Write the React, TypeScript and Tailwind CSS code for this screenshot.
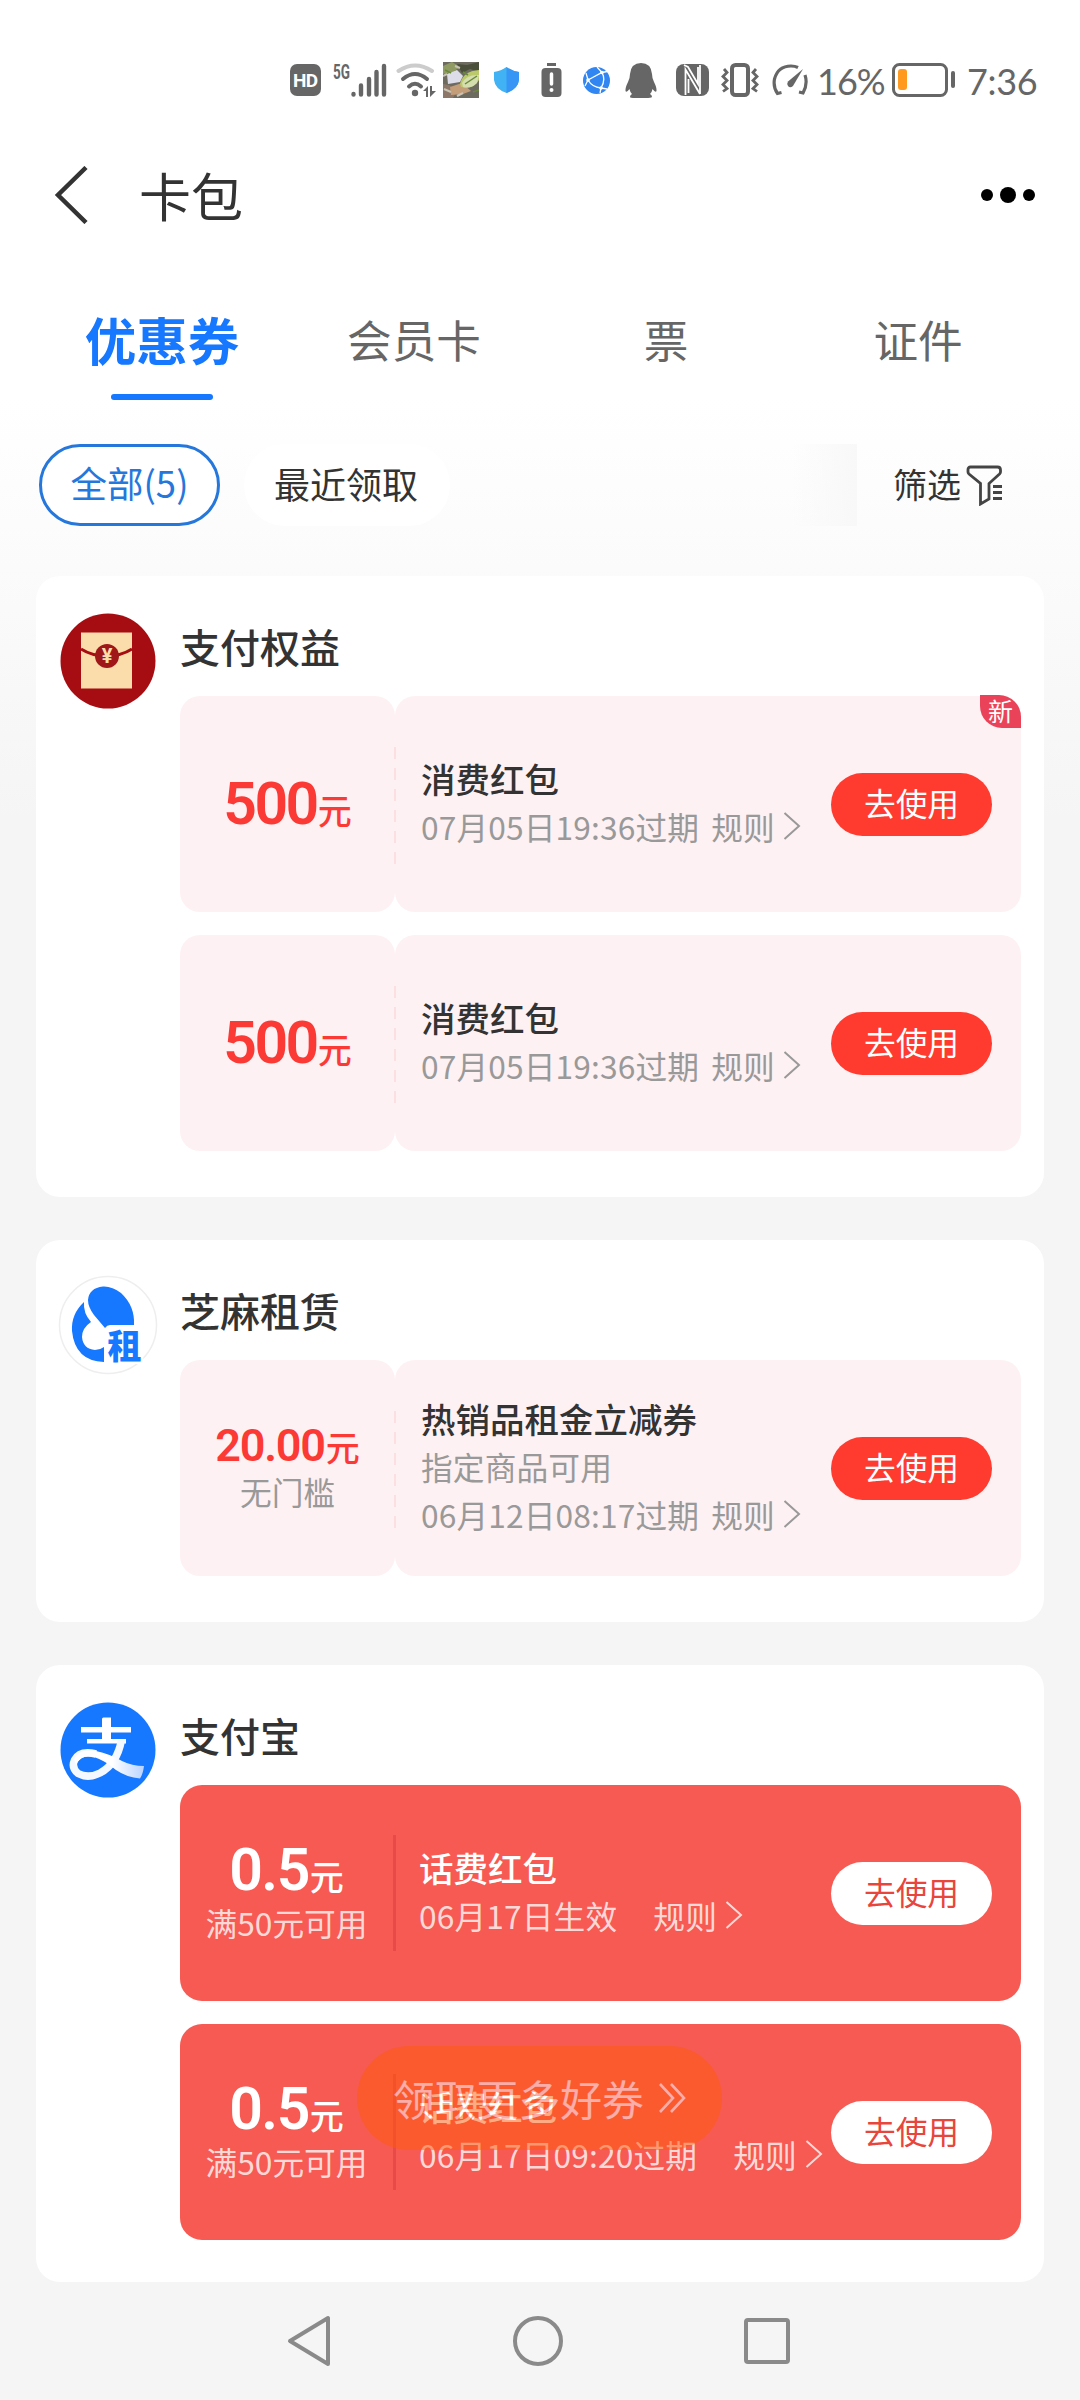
import type { ReactNode } from 'react'

type Coupon = {
    amount: string
    small?: boolean
    limit?: string
    name: string
    desc?: string
    date: string
    isNew?: boolean
}

const payCoupons: Coupon[] = [
    { amount: '500', name: '消费红包', date: '07月05日19:36过期', isNew: true },
    { amount: '500', name: '消费红包', date: '07月05日19:36过期' },
]

const rentCoupons: Coupon[] = [
    {
        amount: '20.00',
        small: true,
        limit: '无门槛',
        name: '热销品租金立减券',
        desc: '指定商品可用',
        date: '06月12日08:17过期',
    },
]

const alipayCoupons: Coupon[] = [
    { amount: '0.5', limit: '满50元可用', name: '话费红包', date: '06月17日生效' },
    { amount: '0.5', limit: '满50元可用', name: '话费红包', date: '06月17日09:20过期' },
]

const StatusBar = () => {
    return (
        <div className="flex h-[112px] items-center pt-12 pl-[290px] text-[#666]">
            <svg width="31" height="32" viewBox="0 0 31 32">
                <rect width="31" height="32" rx="7" fill="#666" />
                <text x="15.5" y="23" fontSize="19" fontWeight="700" fill="#fff" textAnchor="middle" textLength="25" fontFamily="Roboto, sans-serif">HD</text>
            </svg>
            <svg className="ml-3 overflow-visible" width="54" height="36" viewBox="0 0 54 36">
                <text x="0" y="17" fontSize="20" fontWeight="700" fill="#666" textLength="17" lengthAdjust="spacingAndGlyphs" fontFamily="Roboto, sans-serif">5G</text>
                <path d="M20.500 32.500v-.5M28 32.500v-9M36 32.500V17M43.500 32.500V10M51 32.500V4" stroke="#666" strokeWidth="4.400" strokeLinecap="round" />
            </svg>
            <svg className="ml-[9px]" width="41" height="36" viewBox="0 0 41 36">
                <path d="M2.500 9Q19 -2 36 9" stroke="#ccc" strokeWidth="4" fill="none" strokeLinecap="round" />
                <path d="M7 17Q19 7 31 17M13 24.500Q19 19 25 24.500" stroke="#666" strokeWidth="4" fill="none" strokeLinecap="round" />
                <circle cx="19" cy="31" r="3.200" fill="#666" />
                <path d="M27 29l5-5v11h-2v-6zM34 24v11l6-6h-4v-5z" fill="#666" />
            </svg>
            <svg className="ml-[6px]" width="36" height="36" viewBox="0 0 36 36">
                <rect width="36" height="36" fill="#6d6b60" />
                <path d="M0 4l9-4 8 5-7 5-10 2z" fill="#8f9b62" />
                <path d="M14 2l10 1 12-3v10l-9-3-8 4z" fill="#4a4f3a" />
                <path d="M4 12l10-4 6 6-3 6-12 2z" fill="#dcdde8" />
                <path d="M0 22l6 1 8 6-4 7H0z" fill="#8d7768" />
                <path d="M7 25l12-4 9 8-8 3-12 1z" fill="#c39c78" />
                <path d="M17 22q3-13 19-14v10q-6 10-18 7z" fill="#bcc96a" />
                <path d="M19 21q5-9 17-8l-2 8q-6 6-14 4z" fill="#d4deae" />
                <path d="M22 22l12-8M20 10l5 3M2 8l6 3M30 30l6-2" stroke="#6a8a3a" strokeWidth="1.500" />
                <path d="M0 14l4-2M12 4l5 2M1 27l7 3M14 34l6-3" stroke="#c9c4b4" strokeWidth="2" />
            </svg>
            <svg className="ml-[14px]" width="27" height="26" viewBox="0 0 27 26">
                <path d="M13.500 0Q19 4 26 5v8q-1 9-12.500 13Q2 22 1 13V5Q8 4 13.500 0z" fill="#41b2f4" />
                <path d="M13.500 0Q19 4 26 5v8q-1 9-12.500 13z" fill="#3795f5" />
            </svg>
            <svg className="ml-[21px]" width="21" height="35" viewBox="0 0 21 35">
                <path d="M6 0h9v3H6z" fill="#666" />
                <rect x="0.500" y="5" width="20" height="29" rx="4" fill="#666" />
                <path d="M10.500 11v10" stroke="#fff" strokeWidth="3.500" strokeLinecap="round" />
                <circle cx="10.500" cy="27" r="2" fill="#fff" />
            </svg>
            <svg className="ml-[21px]" width="27" height="27" viewBox="0 0 27 27">
                <circle cx="13.500" cy="13.500" r="13.500" fill="#3186f2" />
                <path d="M5 13L19 5.500Q23 13 18 21Q9 20 5 13L3 6M19 5.500L14 0M19 5.500l5-1M5 13l-3 6M18 21l6 1M18 21l-1 5" stroke="#fff" strokeWidth="1.300" fill="none" />
                <circle cx="5" cy="13" r="1.800" fill="#fff" />
                <circle cx="19" cy="5.500" r="1.800" fill="#fff" />
                <circle cx="18" cy="21" r="1.800" fill="#fff" />
            </svg>
            <svg className="ml-[15px]" width="32" height="35" viewBox="0 0 32 35">
                <path d="M16 0Q26 0 27 11q0 4 2 8 3 6 2.500 9-1 2-4-2-.5 3-2.500 5 2 1 2 3-1 1-6 1H10q-5 0-5-1 0-2 2-3-2-2-2.500-5-3 4-4 2Q0 25 3 19q2-4 2-8Q6 0 16 0z" fill="#666" />
            </svg>
            <svg className="ml-[19px]" width="33" height="32" viewBox="0 0 33 32">
                <rect width="33" height="32" rx="8" fill="#666" />
                <path d="M9.500 31V5.500L24 30M8 1l4 2 10 17V3M24 1v29M12.500 29V15" stroke="#fff" strokeWidth="1.800" fill="none" />
            </svg>
            <svg className="ml-[11px]" width="40" height="34" viewBox="0 0 40 34">
                <rect x="12" y="2" width="16" height="30" rx="3.500" stroke="#666" strokeWidth="4" fill="none" />
                <path d="M4 6l3 3.500-4 4 4 4-4 4 4 4-4 3M36 6l-3 3.500 4 4-4 4 4 4-4 4 4 3" stroke="#666" strokeWidth="2.800" fill="none" />
            </svg>
            <svg className="ml-[12px]" width="37" height="32" viewBox="0 0 37 32">
                <path d="M9.500 28.500l-4 1Q1 23 2.500 15 6 2 19 2q4 0 7 1.500M33 11q3 9-2 18l-4-1" stroke="#666" strokeWidth="3.200" fill="none" />
                <path d="M31 5L21 22q-3 2.500-5 0-1.500-2 0-4.500z" fill="#666" />
            </svg>
            <span className="ml-[8px] w-[66px] pt-0.5 font-[Lato] text-[36px] tracking-[-1px] whitespace-nowrap">16%</span>
            <svg className="ml-[9px]" width="64" height="34" viewBox="0 0 64 34">
                <rect x="1.500" y="1.500" width="53" height="31" rx="6" stroke="#666" strokeWidth="3" fill="none" />
                <rect x="6" y="6" width="9" height="21" rx="3" fill="#ff9a1e" />
                <rect x="59" y="8" width="4" height="17" rx="2" fill="#666" />
            </svg>
            <span className="ml-[11px] pt-0.5 font-[Lato] text-[36px] tracking-[-0.300px] whitespace-nowrap">7:36</span>
        </div>
    )
}

const Header = () => {
    return (
        <div className="flex h-[166px] items-center pr-[45px] pl-[54px]">
            <svg width="35" height="58" viewBox="0 0 35 58">
                <path d="M32 1.500L4 29l28 27.500" stroke="#333" strokeWidth="4.500" fill="none" />
            </svg>
            <h1 className="ml-[50px] text-[52px] leading-none text-[#333]">卡包</h1>
            <div className="ml-auto flex items-center gap-[7px]">
                <span className="h-3 w-3 rounded-full bg-black" />
                <span className="h-4 w-4 rounded-full bg-black" />
                <span className="h-3 w-3 rounded-full bg-black" />
            </div>
        </div>
    )
}

const Tabs = () => {
    return (
        <div className="grid h-[126px] grid-cols-4 px-9 text-center text-[44.600px] leading-[122px] text-[#666]">
            <div className="relative text-[51.500px] font-bold text-[#1677ff]">
                优惠券
                <span className="absolute bottom-1 left-[75px] h-[6px] w-[102px] rounded-full bg-[#1677ff]" />
            </div>
            <div>会员卡</div>
            <div>票</div>
            <div>证件</div>
        </div>
    )
}

const Filters = () => {
    return (
        <div className="mt-10 flex h-[82px] items-center pl-[39px] text-[36px] text-[#333]">
            <div className="flex h-[82px] w-[181px] items-center justify-center rounded-full border-[3px] border-[#2577dc] bg-white pb-1 text-[36.500px] text-[#2577dc]">
                全部(5)
            </div>
            <div className="ml-6 flex h-[82px] w-[206px] items-center justify-center rounded-full bg-white pr-0.5 pb-1">最近领取</div>
            <div className="ml-[342px] h-[82px] w-[65px] bg-linear-to-r from-transparent to-[#f8f8f8]" />
            <div className="ml-[36px] pb-1 text-[34px]">筛选</div>
            <svg className="ml-[5px]" width="37" height="41" viewBox="0 0 37 41">
                <path d="M4.500 2h27q3 0 3 3v2q0 1-1 2L23 18.500V34l-8.500 5V18.500L3 9Q2 8 2 7V4.500Q2 2 4.500 2z" stroke="#444" strokeWidth="2.800" fill="none" />
                <path d="M27 21.500h9M27 27.500h9M27 33.500h9" stroke="#444" strokeWidth="2.800" />
            </svg>
        </div>
    )
}

const EnvelopeLogo = () => (
    <svg width="96" height="96" viewBox="0 0 96 96">
        <circle cx="48" cy="48" r="47.500" fill="#a50d12" />
        <rect x="21" y="19.500" width="51" height="56" fill="#fbdcab" />
        <path d="M21 36q11 7 25.500 7T72 36" stroke="#a50d12" strokeWidth="3" fill="none" />
        <circle cx="47" cy="43" r="12" fill="#a0171a" />
        <text x="47" y="50" fontSize="20" fontWeight="700" fill="#fbdcab" textAnchor="middle" fontFamily="Roboto, sans-serif">¥</text>
    </svg>
)

const RentLogo = () => (
    <svg width="100" height="100" viewBox="0 0 100 100">
        <circle cx="50" cy="50" r="48.500" fill="#fff" stroke="#eee" strokeWidth="1.500" />
        <path d="M26 27Q13 39 14 56q3 30 32 31V72q-4 3-9 3-12-1-13-13 0-9 9-15-8-9-7-20z" fill="#1677ff" />
        <path d="M45 11.500Q31 13 30 25q0 7 6 15l11 13q2-3 5-3h24q1-19-13-32-9-7-18-6.500z" fill="#1677ff" />
        <text x="66.500" y="84" fontSize="34" fontWeight="900" fill="#1677ff" stroke="#fff" strokeWidth="5" paintOrder="stroke" textAnchor="middle" fontFamily="Noto Sans CJK SC, sans-serif">租</text>
    </svg>
)

const AlipayLogo = () => (
    <svg width="96" height="96" viewBox="0 0 96 96">
        <defs>
            <linearGradient id="tail" x1="0" x2="1">
                <stop offset="0.550" stopColor="#fff" />
                <stop offset="1" stopColor="#b9d3ff" />
            </linearGradient>
        </defs>
        <circle cx="48" cy="48" r="47.500" fill="#1677ff" />
        <path d="M42 17q0-1.500 1.500-1.500H51V38h-9z" fill="#fff" />
        <path d="M21 25h50v5.500H21zM27 37h39v4.500H27z" fill="#fff" />
        <path d="M61.500 38Q57 62 40 71 28 77 18 71.500q-7-6-3.500-13.500Q20 48 36 52" stroke="#f4f8ff" strokeWidth="7.500" fill="none" />
        <path d="M14 57Q20 46 36 49q14 3 26 10 10 5 22 5-1 8-4 12.500-13-1-24-8.500Q44 58 34 55q-13-3-18 8z" fill="url(#tail)" />
    </svg>
)

const Arrow = ({ color }: { color: string }) => (
    <svg width="18" height="28" viewBox="0 0 18 28">
        <path d="M1.500 1L16 14 1.500 27" stroke={color} strokeWidth="2" fill="none" />
    </svg>
)

const PinkCoupon = ({ item }: { item: Coupon }) => {
    return (
        <div className="relative flex h-[216px]">
            <div className="flex w-[215px] flex-col items-center justify-center rounded-[20px] bg-[#fef1f3]">
                <div className={`flex items-baseline text-[#fb3a35] ${item.small ? 'leading-[44px]' : 'pt-1.5 leading-[48px]'}`}>
                    <span className={item.small ? 'font-[Roboto] text-[45px] font-semibold tracking-[-1.200px]' : 'font-[Roboto] text-[59px] font-semibold tracking-[-2.500px]'}>
                        {item.amount}
                    </span>
                    <span className="ml-px text-[34px] font-medium">元</span>
                </div>
                {item.limit && <div className="text-[31.700px] leading-[44px] text-[#999]">{item.limit}</div>}
            </div>
            <div className="flex flex-1 items-center rounded-[20px] bg-[#fef1f3] pr-[29px] pl-[26px]">
                <div className="flex-1 pb-1 text-[31.700px] leading-[48px] tracking-[0.150px] whitespace-nowrap text-[#999]">
                    <div className="text-[34.500px] font-medium tracking-normal text-[#333]">{item.name}</div>
                    {item.desc && <div>{item.desc}</div>}
                    <div className="flex items-center">
                        <span>{item.date}</span>
                        <span className="mr-[8px] ml-3">规则</span>
                        <Arrow color="#999" />
                    </div>
                </div>
                <button className="h-[63px] w-[161px] rounded-full bg-[#ff3b30] pb-[3px] text-[31.700px] leading-none text-white">去使用</button>
            </div>
            {/* perforation between the two halves */}
            <svg className="absolute top-[51px] left-[213px]" width="4" height="118" viewBox="0 0 4 118">
                <path d="M2 0v118" stroke="#fbdfe1" strokeWidth="2" strokeDasharray="12 9" />
            </svg>
            {item.isNew && (
                <span className="absolute -top-px right-0 h-[33px] w-[41px] rounded-tr-[22px] rounded-bl-[22px] bg-[#ea4359] text-center text-[25px] leading-[31px] text-white">
                    新
                </span>
            )}
        </div>
    )
}

const RedCoupon = ({ item }: { item: Coupon }) => {
    return (
        <div className="flex h-[216px] items-center rounded-[22px] bg-[#f75a53] pr-[29px]">
            <div className="flex w-[213px] flex-col items-center justify-center pt-1">
                <div className="flex items-baseline leading-[48px] text-white">
                    <span className="font-[Roboto] text-[59px] font-semibold tracking-[-1.500px]">{item.amount}</span>
                    <span className="ml-px text-[34px] font-medium">元</span>
                </div>
                <div className="text-[31.700px] leading-[44px] text-[#fdd8d6]">{item.limit}</div>
            </div>
            <div className="h-[116px] w-[3px] bg-[#e74a48]" />
            <div className="flex-1 pb-1 pl-[23px] text-[31.700px] leading-[48px] tracking-[0.150px] whitespace-nowrap text-[#fdd8d6]">
                <div className="text-[34.500px] font-medium tracking-normal text-white">{item.name}</div>
                <div className="flex items-center">
                    <span>{item.date}</span>
                    <span className="mr-[8px] ml-9">规则</span>
                    <Arrow color="#fdd8d6" />
                </div>
            </div>
            <button className="h-[63px] w-[161px] rounded-full bg-white pb-[3px] text-[31.700px] leading-none text-[#e8453c]">去使用</button>
        </div>
    )
}

const Card = ({ logo, title, className, children }: { logo: ReactNode; title: string; className: string; children: ReactNode }) => {
    return (
        <section className={`flex rounded-[24px] bg-white pr-[23px] pl-[22px] ${className}`}>
            <div className="flex h-[170px] w-[100px] shrink-0 justify-center self-start pt-[35px]">
                <div className="flex h-[100px] items-center">{logo}</div>
            </div>
            <div className="ml-[22px] flex-1">
                <h2 className="flex h-[120px] items-center pt-[20px] text-[40px] leading-none font-medium text-[#333]">{title}</h2>
                <div className="flex flex-col gap-[23px]">{children}</div>
            </div>
        </section>
    )
}

const NavBar = () => {
    return (
        <nav className="flex h-[118px] items-center justify-center gap-[181px] bg-[#f5f5f5] pr-1">
            <svg width="46" height="52" viewBox="0 0 46 52">
                <path d="M42 3v46L4 26z" stroke="#8a8a8a" strokeWidth="4" strokeLinejoin="round" fill="none" />
            </svg>
            <span className="h-[50px] w-[50px] rounded-full border-4 border-[#8a8a8a]" />
            <span className="h-[46px] w-[46px] rounded-[4px] border-4 border-[#8a8a8a]" />
        </nav>
    )
}

const App = () => {
    return (
        <div className="relative h-[2400px] w-[1080px] overflow-hidden bg-[#f5f5f5] bg-linear-to-b from-white from-[400px] to-[#f5f5f5] to-[820px] font-['Noto_Sans_CJK_SC',sans-serif]">
            <StatusBar />
            <Header />
            <Tabs />
            <Filters />
            <main className="mt-[50px] flex flex-col gap-[43px] px-9">
                <Card logo={<EnvelopeLogo />} title="支付权益" className="h-[621px]">
                    {payCoupons.map((item, i) => <PinkCoupon key={i} item={item} />)}
                </Card>
                <Card logo={<RentLogo />} title="芝麻租赁" className="h-[382px]">
                    {rentCoupons.map((item, i) => <PinkCoupon key={i} item={item} />)}
                </Card>
                <Card logo={<AlipayLogo />} title="支付宝" className="h-[617px]">
                    {alipayCoupons.map((item, i) => <RedCoupon key={i} item={item} />)}
                </Card>
            </main>
            <NavBar />

            <div className="absolute top-[2046px] left-[357px] flex h-[104px] w-[365px] items-center rounded-full bg-[#ff5a0c] pl-[36px] text-[41.800px] whitespace-nowrap text-white opacity-50">
                <span>领取更多好券</span>
                <svg className="ml-[14px]" width="29" height="32" viewBox="0 0 29 32">
                    <path d="M2 2l13 14L2 30M13 2l13 14-13 14" stroke="#fff" strokeWidth="2.600" fill="none" />
                </svg>
            </div>
        </div>
    )
}

export default App
